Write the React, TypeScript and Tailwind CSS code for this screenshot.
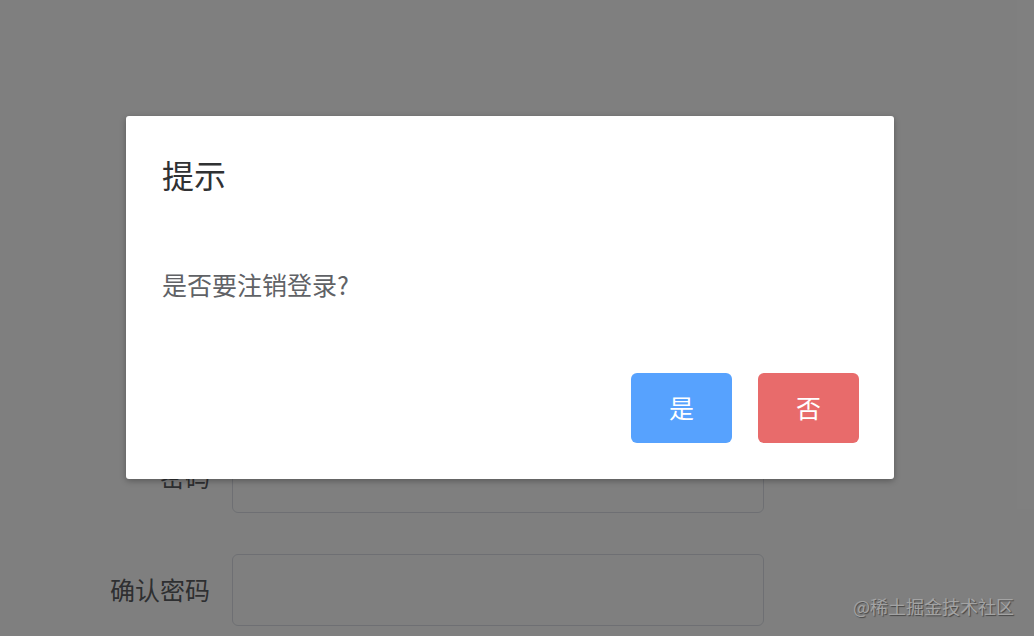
import React from 'react';

const font = { fontFamily: '"Noto Sans CJK SC", "Noto Sans", sans-serif' };

const rows = [
  { label: '用户名', top: 'mt-[215px]' },
  { label: '手机号', top: 'mt-[41px]' },
  { label: '密码', top: 'mt-[41px]' },
  { label: '确认密码', top: 'mt-[41px]' },
];

const App = () => {
  return (
    <div className="relative w-[1034px] h-[636px] overflow-hidden bg-white" style={font}>
      {/* page under the mask */}
      <div className="flex flex-col">
        {rows.map((row) => (
          <div key={row.label} className={`flex items-center ${row.top}`}>
            <label className="w-[210px] text-right text-[25px] text-[#5c5e62]">{row.label}</label>
            <div className="ml-[22px] w-[532px] h-[72px] shrink-0 rounded-[6px] border border-[#dcdfe6] bg-white" />
          </div>
        ))}
      </div>

      {/* mask */}
      <div className="absolute inset-0 bg-black/50">
        <div className="ml-[126px] mt-[116px] w-[768px] h-[363px] rounded-[3px] bg-white shadow-[0_2px_6px_rgba(0,0,0,0.3)] flex flex-col px-[36px]">
          <h2 className="pt-[42px] text-[32px] leading-[32px] text-[#303133]">提示</h2>
          <p className="mt-[82px] text-[25px] leading-[25px] text-[#606266]">是否要注销登录?</p>
          <div className="mt-auto mb-[36px] flex justify-end gap-[26px] -mr-px">
            <button className="w-[101px] h-[70px] rounded-[6px] bg-[#57a2fe] text-white text-[25px]">是</button>
            <button className="w-[101px] h-[70px] rounded-[6px] bg-[#e86b6b] text-white text-[25px]">否</button>
          </div>
        </div>
      </div>

      <div className="absolute right-[20px] bottom-[20px] text-[18px] leading-[20px] text-[#a3a3a3] [text-shadow:1px_1px_1px_rgba(0,0,0,0.45)]">
        @稀土掘金技术社区
      </div>
    </div>
  );
};

export default App;
